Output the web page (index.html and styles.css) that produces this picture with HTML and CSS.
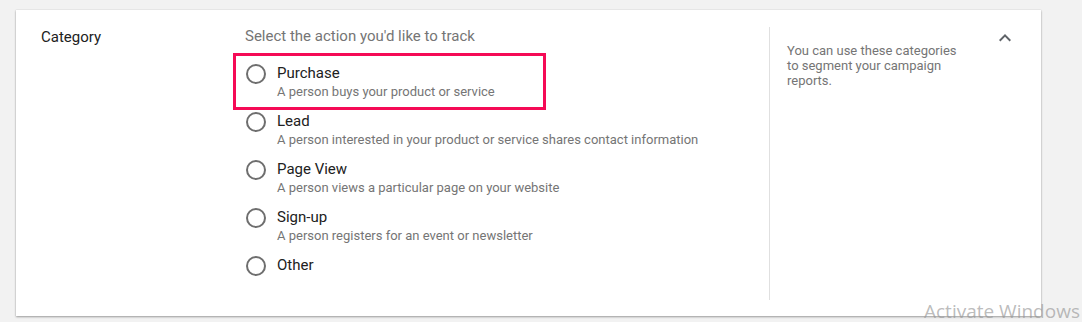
FILE: index.html
```html
<!DOCTYPE html>
<html lang="en">
<head>
    <meta charset="UTF-8">
    <meta name="viewport" content="width=device-width, initial-scale=1.0">
    <title>Conversion category</title>
    <link rel="stylesheet" href="styles.css">
</head>
<body>
    <!-- Category section -->
    <div class="card">
        <div class="label">Category</div>

        <div class="main">
            <div class="prompt">Select the action you'd like to track</div>

            <label class="option marked">
                <span class="radio"></span>
                <span class="text">
                    <span class="title">Purchase</span>
                    <span class="desc">A person buys your product or service</span>
                </span>
            </label>
            <label class="option">
                <span class="radio"></span>
                <span class="text">
                    <span class="title">Lead</span>
                    <span class="desc">A person interested in your product or service shares contact information</span>
                </span>
            </label>
            <label class="option">
                <span class="radio"></span>
                <span class="text">
                    <span class="title">Page View</span>
                    <span class="desc">A person views a particular page on your website</span>
                </span>
            </label>
            <label class="option">
                <span class="radio"></span>
                <span class="text">
                    <span class="title">Sign-up</span>
                    <span class="desc">A person registers for an event or newsletter</span>
                </span>
            </label>
            <label class="option">
                <span class="radio"></span>
                <span class="text">
                    <span class="title">Other</span>
                </span>
            </label>
        </div>

        <div class="side">
            <p class="help">You can use these categories to segment your campaign reports.</p>
            <svg class="chevron" width="24" height="24" viewBox="0 0 24 24">
                <path d="M7.41 15.41L12 10.83l4.59 4.58L18 14l-6-6-6 6z" fill="#5f6368"/>
            </svg>
        </div>
    </div>

    <div class="watermark">Activate Windows</div>
</body>
</html>
```

FILE: styles.css
```css
body {
    margin: 0;
    background-color: #f2f2f2;
    font-family: Roboto, "Liberation Sans", sans-serif;
    position: relative;
    height: 322px;
    overflow: hidden;
}

.card {
    display: flex;
    margin: 10px 0 0 16px;
    width: 1025px;
    height: 306px;
    box-sizing: border-box;
    background-color: #fff;
    box-shadow: 0 1px 2px rgba(0, 0, 0, 0.35), 0 0 1px rgba(0, 0, 0, 0.15);
}

.label {
    width: 204px;
    padding: 17px 0 0 25px;
    font-size: 15px;
    line-height: 20px;
    color: #212121;
}

.main {
    width: 524px;
    padding-top: 16px;
    display: flex;
    flex-direction: column;
    gap: 10px;
}

.prompt {
    font-size: 15px;
    line-height: 20px;
    color: #757575;
    margin-bottom: 7px;
}

.option {
    display: flex;
    gap: 11px;
    position: relative;
}

.option.marked::after {
    content: "";
    position: absolute;
    left: -12px;
    top: -10px;
    width: 307px;
    height: 51px;
    border: 3px solid #f50a56;
}

.radio {
    width: 16px;
    height: 16px;
    margin: 1px 0 0 1px;
    border: 2px solid #6e6e6e;
    border-radius: 50%;
    flex: none;
}

.text {
    display: flex;
    flex-direction: column;
}

.title {
    font-size: 15px;
    line-height: 20px;
    color: #212121;
}

.desc {
    font-size: 13px;
    line-height: 18px;
    color: #757575;
}

.side {
    flex: 1;
    display: flex;
    justify-content: space-between;
    align-items: flex-start;
    margin: 17px 0 16px;
    border-left: 1px solid #e0e0e0;
    padding-left: 17px;
}

.help {
    margin: 16px 0 0;
    width: 175px;
    font-size: 13px;
    line-height: 15px;
    color: #757575;
}

.chevron {
    margin: -1px 24px 0 0;
}

.watermark {
    position: absolute;
    left: 924px;
    top: 298px;
    font-family: "Open Sans", sans-serif;
    font-size: 19px;
    color: rgba(150, 150, 150, 0.65);
}
```
